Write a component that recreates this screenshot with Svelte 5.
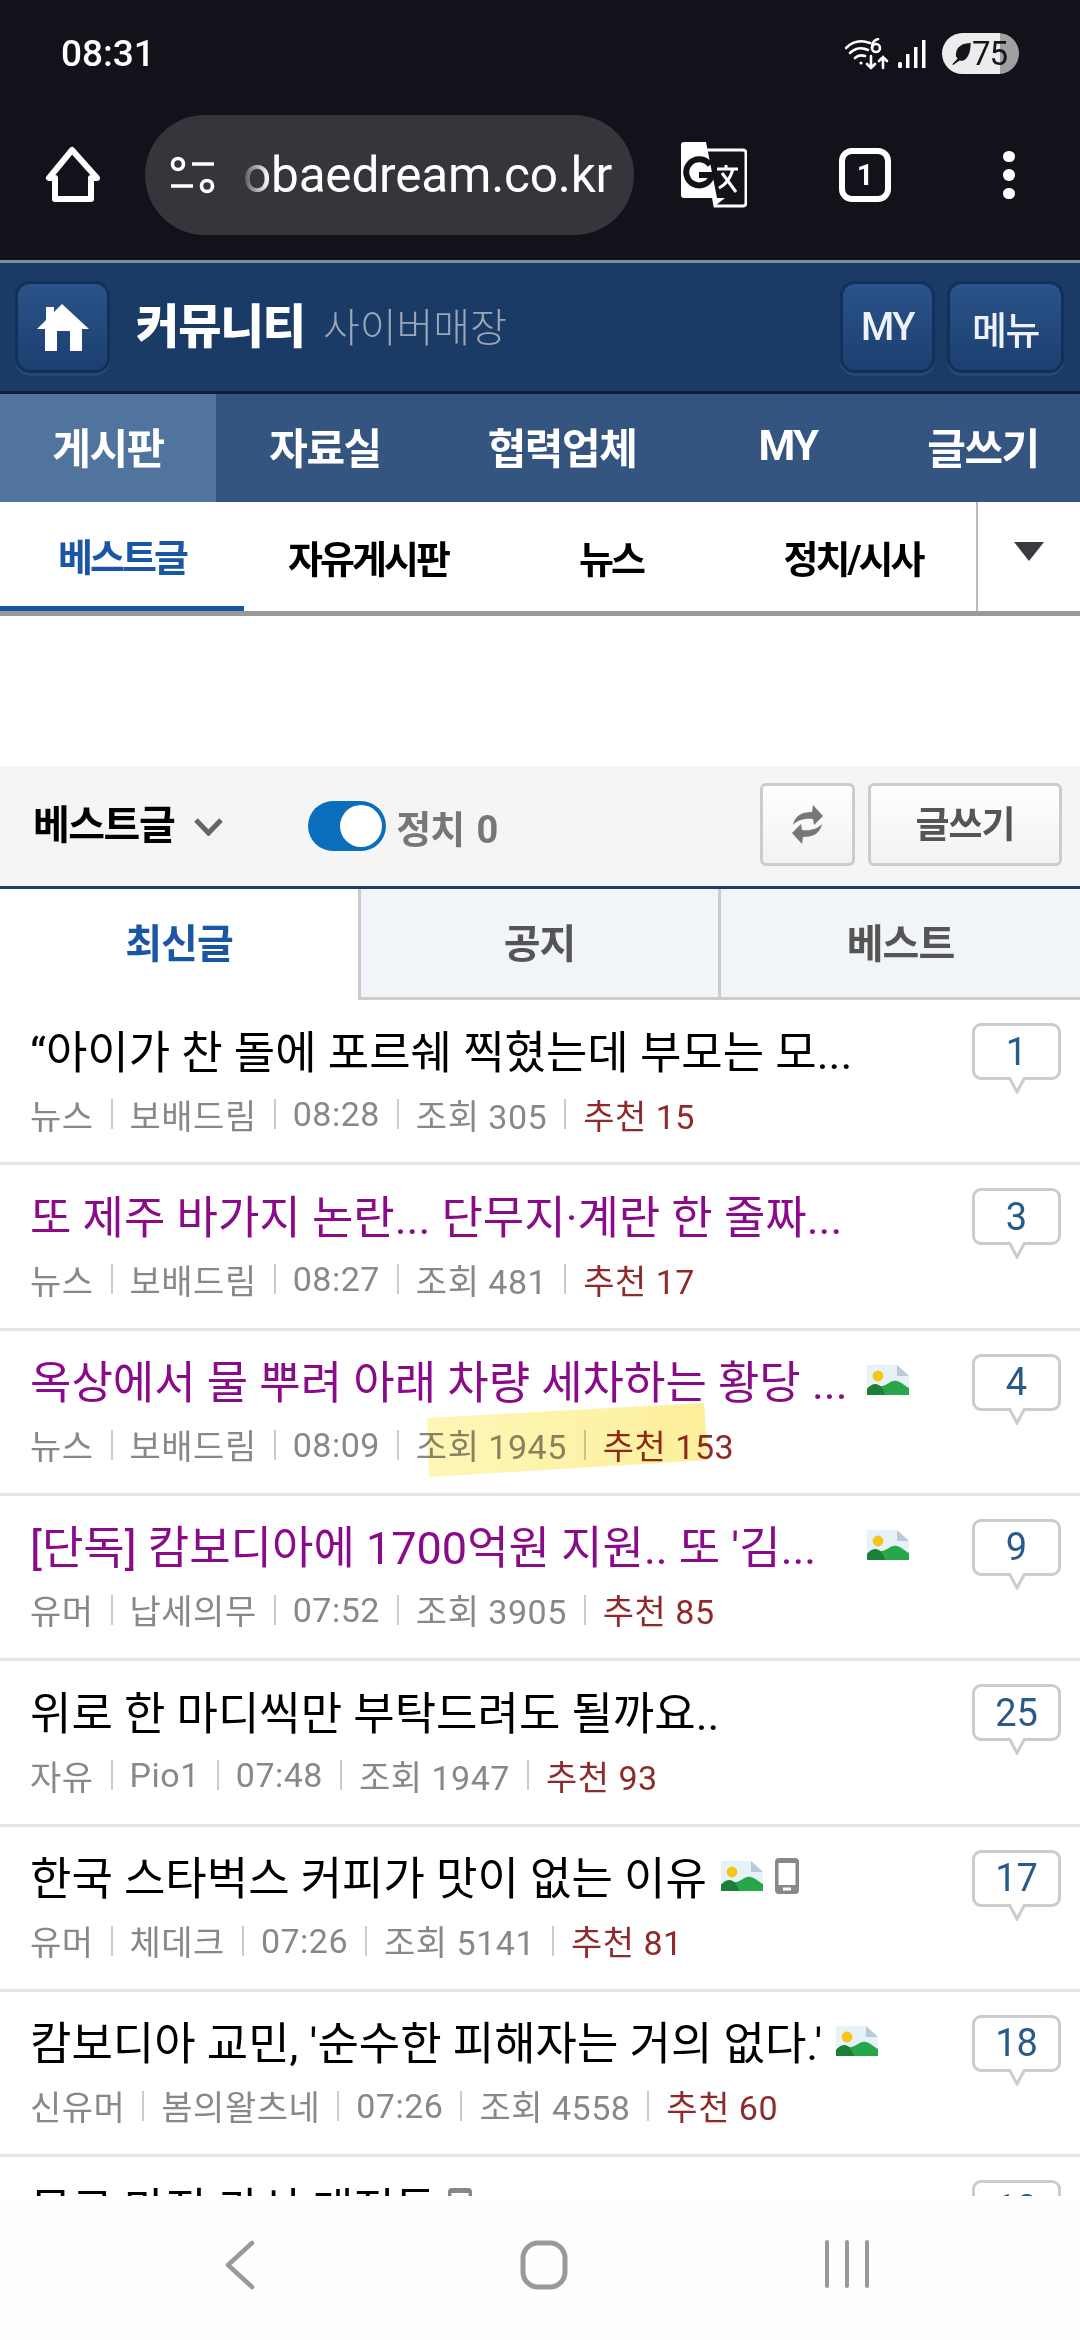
<script>
	const rows = [
		{ title: "“아이가 찬 돌에 포르쉐 찍혔는데 부모는 모...", meta: ["뉴스", "보배드림", "08:28", "조회 305"], rec: "추천 15", count: 1 },
		{ title: "또 제주 바가지 논란... 단무지·계란 한 줄짜...", meta: ["뉴스", "보배드림", "08:27", "조회 481"], rec: "추천 17", count: 3, visited: true },
		{ title: "옥상에서 물 뿌려 아래 차량 세차하는 황당 ...", meta: ["뉴스", "보배드림", "08:09", "조회 1945"], rec: "추천 153", count: 4, visited: true, image: true, fit: true },
		{ title: "[단독] 캄보디아에 1700억원 지원.. 또 '김...", meta: ["유머", "납세의무", "07:52", "조회 3905"], rec: "추천 85", count: 9, visited: true, image: true, fit: true },
		{ title: "위로 한 마디씩만 부탁드려도 될까요..", meta: ["자유", "Pio1", "07:48", "조회 1947"], rec: "추천 93", count: 25 },
		{ title: "한국 스타벅스 커피가 맛이 없는 이유", meta: ["유머", "체데크", "07:26", "조회 5141"], rec: "추천 81", count: 17, image: true, mobile: true },
		{ title: "캄보디아 교민, '순수한 피해자는 거의 없다.'", meta: ["신유머", "봄의왈츠네", "07:26", "조회 4558"], rec: "추천 60", count: 18, image: true },
		{ title: "무료 마진 가성 매점들", count: 13, mobile: true }
	];
</script>

<div class="phone">
	<div class="chrome">
		<div class="status">
			<span class="time">08:31</span>
			<div class="status-icons">
				<svg width="44" height="32" viewBox="0 0 44 32" fill="none" stroke="#fff" stroke-width="2.6" stroke-linecap="round">
					<path d="M1 10 C8 3 17 2 25 5" />
					<path d="M5 15 C10 10 17 9 23 12" />
					<path d="M10 20 C13 17 17 17 20 18" />
					<circle cx="16" cy="25" r="1.6" fill="#fff" stroke="none" />
					<circle cx="31" cy="10" r="4" />
					<path d="M27 10 C27 5 29 2 33 1" />
					<path d="M26 18 V30 M22 26 L26 30 L30 26" />
					<path d="M38 30 V19 M34 23 L38 19 L42 23" />
				</svg>
				<svg width="28" height="30" viewBox="0 0 28 30" fill="#fff">
					<rect x="0" y="23" width="4" height="6" rx="1.5" />
					<rect x="8" y="15" width="3.5" height="14" />
					<rect x="16" y="8" width="3.5" height="21" />
					<rect x="24" y="1" width="3.5" height="28" />
				</svg>
				<div class="battery">
					<svg width="20" height="24" viewBox="0 0 21 26" fill="#15161c">
						<path d="M21 1 C12 1 5 5 5 14 C5 16 6 17 7 18 L1 24 L2 25 L9 20 C17 22 21 12 21 1 Z" />
					</svg>
					<span>75</span>
				</div>
			</div>
		</div>
		<div class="browser">
			<svg class="chrome-home" width="60" height="60" viewBox="0 0 60 60" fill="none" stroke="#fff" stroke-width="6" stroke-linejoin="round">
				<path d="M28 5 L5 33 H11 V54 H47 V33 H53 Z" />
			</svg>
			<div class="url">
				<svg width="46" height="38" viewBox="0 0 46 38" fill="none" stroke="#fff" stroke-width="3.6">
					<circle cx="8" cy="8" r="5.5" />
					<path d="M22 8 H44 M1 30 H23" />
					<circle cx="37" cy="30" r="5.5" />
				</svg>
				<span class="url-text">obaedream.co.kr</span>
			</div>
			<svg class="translate" width="66" height="66" viewBox="0 0 66 66">
				<path d="M24 8 H62 A3 3 0 0 1 65 11 V61 A3 3 0 0 1 62 64 H34 L24 8 Z" fill="#12131a" stroke="#fff" stroke-width="3" />
				<path d="M3 0 H25 L36 56 H3 A3 3 0 0 1 0 53 V3 A3 3 0 0 1 3 0 Z" fill="#fff" />
				<path d="M34 56 H44 L34 64 Z" fill="#fff" />
				<path d="M29 23 A13 13 0 1 0 31 33 H18" fill="none" stroke="#12131a" stroke-width="6" />
				<path d="M36 27 H57 M45 23 V27 M52 27 C49 38 44 43 38 46 M41 31 L55 50" fill="none" stroke="#fff" stroke-width="3" />
			</svg>
			<div class="tab-count">1</div>
			<div class="kebab"><i></i><i></i><i></i></div>
		</div>
	</div>

	<header class="site-head">
		<button class="head-btn home">
			<svg width="52" height="47" viewBox="0 0 52 47" fill="#fff">
				<path d="M25 0 L52 25 H45 V47 H33 V27 H20 V47 H8 V25 H0 L9 16 V3 H17 V8 Z" />
			</svg>
		</button>
		<strong class="brand">커뮤니티</strong>
		<span class="brand-sub">사이버매장</span>
		<div class="head-right">
			<button class="head-btn my">MY</button>
			<button class="head-btn menu">메뉴</button>
		</div>
	</header>

	<nav class="main-nav">
		<a class="active">게시판</a>
		<a>자료실</a>
		<a>협력업체</a>
		<a>MY</a>
		<a>글쓰기</a>
	</nav>

	<nav class="sub-nav">
		<a class="active">베스트글</a>
		<a>자유게시판</a>
		<a>뉴스</a>
		<a>정치/시사</a>
		<div class="more"><span></span></div>
	</nav>

	<div class="blank"></div>

	<div class="toolbar">
		<strong class="board">베스트글</strong>
		<svg class="chev" width="29" height="19" viewBox="0 0 29 19" fill="none" stroke="#666" stroke-width="5">
			<path d="M2 3 L14.5 16 L27 3" />
		</svg>
		<div class="toggle"><i></i></div>
		<span class="toggle-label">정치 0</span>
		<div class="tool-right">
			<button class="tool-btn refresh">
				<svg width="31" height="41" viewBox="0 0 31 41" fill="#777">
					<path d="M1 21 C3 12 9 8 20 8 L21 1 L31 12 L22 21 L21 15 C12 14 6 16 1 21 Z" />
					<path d="M1 21 C3 12 9 8 20 8 L21 1 L31 12 L22 21 L21 15 C12 14 6 16 1 21 Z" transform="rotate(180 15.5 20.5)" />
				</svg>
			</button>
			<button class="tool-btn write">글쓰기</button>
		</div>
	</div>

	<div class="tabs">
		<a class="active">최신글</a>
		<a>공지</a>
		<a>베스트</a>
	</div>

	<div class="list">
		{#each rows as row}
			<div class="row">
				<div class="row-body">
					<div class="title-line" class:visited={row.visited}>
						<span class="title" class:fit={row.fit}>{row.title}</span>
						{#if row.image}
							<svg class="pic" width="42" height="30" viewBox="0 0 42 30">
								<path d="M0 0 H30 L42 11 V30 H0 Z" fill="#e6f1f8" />
								<path d="M30 0 L42 11 H30 Z" fill="#b8cad6" />
								<circle cx="11" cy="11" r="5.4" fill="#f5c518" />
								<path d="M0 30 V24 C4 19 9 18 13 21 C19 22 24 14 30 16 C36 18 39 22 42 23 V30 Z" fill="#27a749" />
								<path d="M0 30 V24 C4 19 9 18 13 21 C15 23 17 26 18 30 Z" fill="#1b7f37" />
							</svg>
						{/if}
						{#if row.mobile}
							<svg class="mob" width="24" height="36" viewBox="0 0 24 36">
								<rect width="24" height="36" rx="4" fill="#888" />
								<rect x="3.5" y="5" width="17" height="22" fill="#fff" />
								<rect x="8" y="29.5" width="8" height="3" fill="#fff" />
							</svg>
						{/if}
					</div>
					{#if row.meta}
						<div class="meta">
							{#each row.meta as item}
								<span>{item}</span><i></i>
							{/each}
							<span class="rec">{row.rec}</span>
						</div>
					{/if}
				</div>
				<div class="bubble">
					{row.count}
					<svg class="tail" width="20" height="17" viewBox="0 0 20 17">
						<path d="M2 0 L10 15 L18 0" fill="#fff" stroke="#ccc" stroke-width="3" />
					</svg>
				</div>
			</div>
		{/each}
	</div>

	<div class="sys-nav">
		<svg width="32" height="50" viewBox="0 0 32 50" fill="none" stroke="#999" stroke-width="4.5" stroke-linecap="round" stroke-linejoin="round">
			<path d="M28 3 L4 25 L28 47" />
		</svg>
		<svg width="50" height="50" viewBox="0 0 50 50" fill="none" stroke="#999" stroke-width="5">
			<rect x="4" y="3" width="42" height="44" rx="15" />
		</svg>
		<svg width="46" height="48" viewBox="0 0 46 48" fill="none" stroke="#999" stroke-width="4" stroke-linecap="round">
			<path d="M3 2 V46 M23 2 V46 M43 2 V46" />
		</svg>
	</div>

	<div class="marker"></div>
</div>

<style>
	:global(body) {
		margin: 0;
		background: #fff;
	}

	.phone {
		position: relative;
		width: 1080px;
		height: 2340px;
		display: flex;
		flex-direction: column;
		overflow: hidden;
		font-family: Roboto, "Noto Sans CJK KR", sans-serif;
		background: #fff;
	}

	a {
		display: flex;
		align-items: center;
		justify-content: center;
	}

	button {
		font-family: inherit;
		padding: 0;
		display: flex;
		align-items: center;
		justify-content: center;
	}

	/* browser chrome */
	.chrome {
		height: 260px;
		background: #12131a;
		color: #fff;
		flex: none;
	}

	.status {
		height: 107px;
		padding: 0 61px;
		display: flex;
		align-items: center;
		justify-content: space-between;
	}

	.time {
		font-size: 37px;
		font-weight: 500;
	}

	.status-icons {
		display: flex;
		align-items: center;
		gap: 9px;
	}

	.status-icons svg:nth-child(2) {
		margin-right: 7px;
	}

	.battery {
		width: 77px;
		height: 41px;
		box-sizing: border-box;
		padding-left: 9px;
		border-radius: 21px;
		display: flex;
		align-items: center;
		gap: 1px;
		color: #15161c;
		font-size: 33px;
		letter-spacing: -1px;
		background: linear-gradient(90deg, #ececec 58px, #a0a0a0 58px);
	}

	.browser {
		height: 120px;
		margin-top: 8px;
		display: flex;
		align-items: center;
		position: relative;
	}

	.chrome-home {
		margin-left: 44px;
		margin-right: 41px;
	}

	.url {
		width: 489px;
		height: 120px;
		box-sizing: border-box;
		padding-left: 25px;
		background: #35363b;
		border-radius: 60px;
		display: flex;
		align-items: center;
		gap: 27px;
	}

	.url-text {
		font-size: 49.5px;
		letter-spacing: -0.2px;
		mask-image: linear-gradient(90deg, rgba(0, 0, 0, 0.15), #000 26px);
	}

	.translate {
		margin-left: 47px;
	}

	.tab-count {
		width: 52px;
		height: 54px;
		box-sizing: border-box;
		margin-left: 92px;
		border: 6px solid #fff;
		border-radius: 13px;
		display: flex;
		align-items: center;
		justify-content: center;
		font-size: 29px;
		font-weight: 700;
	}

	.kebab {
		margin-left: 112px;
		display: flex;
		flex-direction: column;
		gap: 7px;
	}

	.kebab i {
		display: block;
		width: 11.5px;
		height: 11.5px;
		border-radius: 50%;
		background: #fff;
	}

	/* site header */
	.site-head {
		flex: none;
		box-sizing: border-box;
		height: 134px;
		border-top: 3px solid #7d8ba0;
		border-bottom: 3px solid #0c1e30;
		padding-left: 15px;
		padding-right: 16px;
		background: #1a3b66;
		display: flex;
		align-items: center;
	}

	.head-btn {
		height: 92px;
		box-sizing: border-box;
		border: 3px solid #12315a;
		border-radius: 15px;
		background: linear-gradient(#2a5389, #1c3f70);
		box-shadow: 0 3px 0 #28487a;
		color: #eef2f8;
		font-size: 38px;
		font-weight: 500;
		letter-spacing: -1.5px;
	}

	.home {
		width: 95px;
		margin-right: 26px;
	}

	.brand {
		color: #fff;
		font-size: 47px;
		font-weight: 900;
		letter-spacing: -1px;
		margin-bottom: 9px;
	}

	.brand-sub {
		margin-left: 18px;
		color: #9aa6b6;
		font-size: 40px;
		font-weight: 300;
		margin-bottom: 5px;
	}

	.head-right {
		margin-left: auto;
		display: flex;
		gap: 12px;
	}

	.my {
		width: 95px;
	}

	.menu {
		width: 117px;
	}

	.main-nav {
		flex: none;
		height: 108px;
		display: grid;
		grid-template-columns: 216px 218px 256px 196px 194px;
		background: #33557f;
		color: #fff;
		font-size: 42px;
		font-weight: 700;
		letter-spacing: -1.5px;
	}

	.main-nav a {
		padding-bottom: 5px;
	}

	.main-nav .active {
		background: #51749f;
	}

	.sub-nav {
		flex: none;
		box-sizing: border-box;
		height: 114px;
		border-bottom: 5px solid #999;
		display: grid;
		grid-template-columns: 244px 248px 238px 246px 1fr;
		font-size: 38px;
		font-weight: 700;
		letter-spacing: -3px;
		color: #000;
	}

	.sub-nav .active {
		color: #1a56a6;
		border-bottom: 5px solid #1a56a6;
	}

	.more {
		border-left: 2px solid #bbb;
		display: flex;
		align-items: center;
		justify-content: center;
		padding-bottom: 10px;
	}

	.more span {
		width: 0;
		height: 0;
		border-left: 15px solid transparent;
		border-right: 15px solid transparent;
		border-top: 19px solid #3a3b40;
	}

	.blank {
		flex: none;
		height: 150px;
	}

	/* board toolbar */
	.toolbar {
		flex: none;
		box-sizing: border-box;
		height: 123px;
		border-bottom: 3px solid #1b3d66;
		background: #f5f5f5;
		padding: 0 18px 0 33px;
		display: flex;
		align-items: center;
	}

	.board {
		font-size: 40px;
		letter-spacing: -1.5px;
		color: #000;
		font-weight: 700;
		margin-bottom: 8px;
	}

	.chev {
		margin-left: 20px;
	}

	.toggle {
		margin-left: 85px;
		width: 78px;
		height: 50px;
		box-sizing: border-box;
		padding: 4px;
		border-radius: 25px;
		background: #0a6ebd;
		display: flex;
		justify-content: flex-end;
	}

	.toggle i {
		display: block;
		width: 42px;
		height: 42px;
		border-radius: 50%;
		background: #fff;
	}

	.toggle-label {
		margin-left: 10px;
		color: #777;
		font-size: 38px;
		font-weight: 700;
		letter-spacing: -1px;
		word-spacing: 4px;
	}

	.tool-right {
		margin-left: auto;
		display: flex;
		gap: 13px;
		margin-bottom: 4px;
	}

	.tool-btn {
		height: 83px;
		box-sizing: border-box;
		border: 3px solid #ccc;
		border-radius: 6px;
		background: linear-gradient(#fff, #f2f2f2);
	}

	.refresh {
		width: 95px;
	}

	.write {
		width: 194px;
		color: #555;
		font-size: 37px;
		font-weight: 700;
		letter-spacing: -1px;
		padding-bottom: 5px;
	}

	/* tabs */
	.tabs {
		flex: none;
		height: 111px;
		display: grid;
		grid-template-columns: 358px 360px 1fr;
		font-size: 40px;
		font-weight: 700;
		letter-spacing: -1px;
		color: #555;
	}

	.tabs a {
		box-sizing: border-box;
		background: #f1f4f8;
		border-left: 3px solid #ccc;
		border-bottom: 3px solid #ccc;
		padding-bottom: 5px;
	}

	.tabs .active {
		background: #fff;
		border: 0;
		color: #1a56a6;
		padding-bottom: 8px;
	}

	/* article list */
	.list {
		flex: 1;
		min-height: 0;
		overflow: hidden;
	}

	.row {
		box-sizing: border-box;
		height: 165.33px;
		border-bottom: 3px solid #e5e5e5;
		padding: 17px 19px 0 30px;
		display: flex;
		justify-content: space-between;
	}

	.title-line {
		height: 64px;
		display: flex;
		align-items: center;
		gap: 14px;
		color: #000;
		font-size: 45px;
		white-space: nowrap;
	}

	.title-line.visited {
		color: #8a0a8a;
	}

	.title.fit {
		flex: 0 0 823px;
	}

	.pic, .mob {
		flex: none;
	}

	.title-line .mob {
		margin-left: -2px;
	}

	.meta {
		margin-top: 10px;
		height: 46px;
		display: flex;
		align-items: center;
		gap: 17px;
		color: #888;
		font-size: 34px;
		letter-spacing: 0.5px;
		white-space: nowrap;
	}

	.meta i {
		display: block;
		width: 2px;
		height: 30px;
		background: #ccc;
	}

	.rec {
		color: #8e2a2a;
	}

	.bubble {
		position: relative;
		flex: none;
		margin-top: 6px;
		width: 89px;
		height: 57px;
		box-sizing: border-box;
		border: 3px solid #ccc;
		border-radius: 9px;
		display: flex;
		align-items: center;
		justify-content: center;
		color: #2a5a8a;
		font-size: 38px;
	}

	.tail {
		position: absolute;
		left: 32px;
		top: 51px;
	}

	.sys-nav {
		flex: none;
		position: relative;
		height: 144px;
		background: #fefefe;
		box-sizing: border-box;
		padding: 44px 0 0 224px;
		display: flex;
		align-items: flex-start;
	}

	.sys-nav svg:nth-child(2) {
		margin-left: 263px;
	}

	.sys-nav svg:nth-child(3) {
		margin-left: 255px;
	}

	.marker {
		position: absolute;
		left: 427px;
		top: 1403px;
		width: 281px;
		height: 74px;
		background: linear-gradient(90deg, #fdf6b6, #fdf09c);
		mix-blend-mode: multiply;
		clip-path: polygon(0 15px, 277px 0, 281px 57px, 2px 74px);
	}
</style>
